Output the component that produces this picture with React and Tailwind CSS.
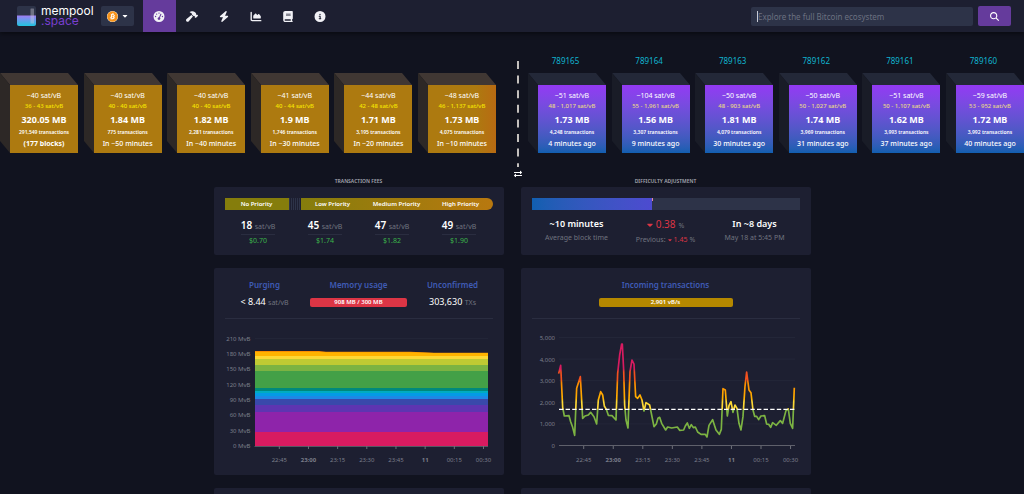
import { FaBitcoin, FaCaretDown, FaExchangeAlt } from "react-icons/fa";
import {
  FaBolt,
  FaBook,
  FaChartArea,
  FaCircleInfo,
  FaGaugeHigh,
  FaHammer,
  FaMagnifyingGlass,
} from "react-icons/fa6";

const navLinks = [
  { label: "Dashboard", Icon: FaGaugeHigh, active: true },
  { label: "Mining", Icon: FaHammer },
  { label: "Lightning", Icon: FaBolt },
  { label: "Graphs", Icon: FaChartArea },
  { label: "Docs", Icon: FaBook },
  { label: "About", Icon: FaCircleInfo },
];

const pendingBlocks = [
  { median: "~40", range: "36 - 43", size: "320.05 MB", txs: "291,549", time: "(177 blocks)", stack: true },
  { median: "~40", range: "40 - 40", size: "1.84 MB", txs: "775", time: "In ~50 minutes" },
  { median: "~40", range: "40 - 40", size: "1.82 MB", txs: "2,281", time: "In ~40 minutes" },
  { median: "~41", range: "40 - 44", size: "1.9 MB", txs: "1,746", time: "In ~30 minutes" },
  { median: "~44", range: "42 - 48", size: "1.71 MB", txs: "3,195", time: "In ~20 minutes" },
  { median: "~48", range: "46 - 1,137", size: "1.73 MB", txs: "4,075", time: "In ~10 minutes", next: true },
];

const minedBlocks = [
  { height: 789165, median: "~51", range: "48 - 1,017", size: "1.73 MB", txs: "4,248", time: "4 minutes ago" },
  { height: 789164, median: "~104", range: "55 - 1,961", size: "1.56 MB", txs: "3,307", time: "9 minutes ago" },
  { height: 789163, median: "~50", range: "48 - 903", size: "1.81 MB", txs: "4,079", time: "30 minutes ago" },
  { height: 789162, median: "~50", range: "50 - 1,027", size: "1.74 MB", txs: "3,969", time: "31 minutes ago" },
  { height: 789161, median: "~51", range: "50 - 1,107", size: "1.62 MB", txs: "3,993", time: "37 minutes ago" },
  { height: 789160, median: "~59", range: "53 - 952", size: "1.72 MB", txs: "3,992", time: "40 minutes ago" },
];

const fees = [
  { rate: 18, usd: "$0.70" },
  { rate: 45, usd: "$1.74" },
  { rate: 47, usd: "$1.82" },
  { rate: 49, usd: "$1.90" },
];

const timeLabels = ["22:45", "23:00", "23:15", "23:30", "23:45", "11", "00:15", "00:30"];
const boldLabels = ["23:00", "11"];

// [top edge, colour], each band is painted over the one before
const feeBands = [
  [26, "#fb8c00"],
  [27, "#ffb300"],
  [31, "#fdd835"],
  [34, "#c0ca33"],
  [40, "#7cb342"],
  [46, "#43a047"],
  [63, "#00897b"],
  [66, "#00acc1"],
  [68, "#039be5"],
  [71, "#1e88e5"],
  [74, "#3949ab"],
  [80, "#5e35b1"],
  [87, "#8e24aa"],
  [107, "#d81b60"],
];

const incomingPoints =
  "131,11 137,-14 143,112 148,138 162,137 167,155 173,172 179,196 185,55 196,20 203,145 210,138 220,135 227,127 237,140 245,162 250,90 257,65 263,75 268,108 274,118 280,136 291,137 303,150 308,10 314,-45 320,-78 322,-78 326,0 329,105 333,150 339,174 345,5 351,-30 357,-18 362,80 368,85 375,75 381,90 387,123 393,98 404,105 410,135 417,170 424,162 429,145 434,142 440,160 452,180 458,171 470,174 487,171 494,181 506,180 511,168 517,159 523,175 529,164 535,173 541,171 548,186 558,193 571,193 576,201 582,166 593,149 603,180 613,193 619,178 624,56 631,60 637,138 642,107 648,95 654,127 660,105 666,115 672,160 678,180 684,140 690,50 695,6 702,60 708,68 714,120 719,139 725,139 731,149 738,138 749,137 755,162 761,163 767,172 773,158 784,166 796,152 803,160 813,122 820,117 826,160 833,175 838,53";

function Logo() {
  return (
    <a href="#home" className="flex items-center gap-[5px]">
      <svg viewBox="0 0 19 20" className="h-5 w-[19px]" aria-hidden="true">
        <defs>
          <linearGradient id="logoFill" x1="0" y1="0" x2="0" y2="1">
            <stop offset="0" stopColor="#a07cf4" />
            <stop offset="1" stopColor="#1fc4de" />
          </linearGradient>
        </defs>
        <rect width="19" height="20" rx="2" fill="#2d3348" />
        <path d="M0 9.5h19V18a2 2 0 0 1-2 2H2a2 2 0 0 1-2-2z" fill="url(#logoFill)" />
        <rect x="13.5" y="2.5" width="3.5" height="15" rx="0.5" fill="#d0d0dc" opacity="0.4" />
      </svg>
      <span className="flex flex-col font-[Inter,sans-serif] text-[12px] leading-[10px] text-white">
        <span>mempool</span>
        <span className="text-[#7a3fd0]">.space</span>
      </span>
    </a>
  );
}

function NavBar() {
  return (
    <header className="flex h-8 items-center justify-between bg-[#1d1f31] pl-[17px] pr-[13px] shadow-[0_2px_4px_#0a0b12]">
      <div className="flex h-full items-center">
        <Logo />
        <button
          type="button"
          aria-label="Network"
          className="ml-[7px] flex h-5 w-[33px] items-center justify-center gap-1 rounded-xs bg-[#2d3348] text-white"
        >
          <FaBitcoin className="h-[11px] w-[11px] rounded-full bg-white text-[#f7931a]" />
          <FaCaretDown className="h-2 w-[6px]" />
        </button>
        <nav className="ml-[9px] flex h-full">
          {navLinks.map(({ label, Icon, active }) => (
            <a
              key={label}
              href={`#${label.toLowerCase()}`}
              aria-label={label}
              className={`flex h-full items-center justify-center text-[#f1f1f6] ${active ? "w-[33px] bg-[#653b9c]" : "w-8"}`}
            >
              <Icon className="h-[11px] w-3" />
            </a>
          ))}
        </nav>
      </div>
      <form className="flex items-center gap-[5px]" onSubmit={(e) => e.preventDefault()}>
        <div className="relative">
          <input
            type="text"
            aria-label="Search"
            placeholder="Explore the full Bitcoin ecosystem"
            className="block h-[19px] w-[222px] rounded-xs bg-[#2d3348] px-[7px] text-[8px] text-white outline-none placeholder:text-[#6b7080]"
          />
          <span className="absolute left-[6px] top-1 h-[11px] w-px bg-[#c8cad4]" />
        </div>
        <button
          type="submit"
          aria-label="Search"
          className="flex h-5 w-[33px] items-center justify-center rounded-xs bg-[#653b9c] text-white"
        >
          <FaMagnifyingGlass className="h-[9px] w-[9px]" />
        </button>
      </form>
    </header>
  );
}

function Cube({ block, mined }) {
  let face = "bg-[#ad7a10]";
  if (mined) face = "bg-linear-to-b from-[#9339f4] to-[#105fb0]";
  else if (block.next) face = "bg-linear-to-r from-[#ad7a10] from-70% to-[#b86a12]";

  return (
    <div className="flex shrink-0 flex-col">
      <a href={`#${block.height ?? "mempool"}`} className="h-[15px] pr-[3px] text-center text-[8px] leading-[15px] text-[#10b3cf]">
        {block.height}
      </a>
      <div className="relative mt-[5px] pl-[10px] pt-3">
        <svg viewBox="0 0 78 80" className="absolute inset-0 h-20 w-[78px]" aria-hidden="true">
          <path d="M0 0H68L78 12H10z" fill={mined ? "#232838" : "#403733"} />
          <path d="M0 0L10 12V80L0 68z" fill={mined ? "#191c27" : "#2d2826"} />
        </svg>
        <div className={`relative flex h-17 w-17 flex-col items-center whitespace-nowrap pt-[6px] text-white ${face}`}>
          <span className="text-[7px] leading-[10px]">{block.median} sat/vB</span>
          <span className={`text-[6px] font-medium leading-[10px] ${mined ? "text-[#e8d78a]" : "text-[#f5e400]"}`}>
            {block.range} sat/vB
          </span>
          <span className="mt-[2px] text-[9px] font-bold leading-[14px]">{block.size}</span>
          <span className="text-[5px] font-semibold leading-[10px]">{block.txs} transactions</span>
          <span className={`mt-px text-[7px] leading-[12px] ${block.stack ? "font-bold" : "font-medium"}`}>
            {block.time}
          </span>
        </div>
      </div>
    </div>
  );
}

function Blockchain() {
  return (
    <section className="grid grid-cols-[1fr_32px_1fr] pt-[21px]">
      <div className="flex justify-between">
        {pendingBlocks.map((block) => (
          <Cube key={block.time} block={block} />
        ))}
      </div>
      <div className="-mb-6 flex flex-col items-center pl-[11px] pt-2 text-white">
        <svg viewBox="0 0 2 108" className="h-[108px] w-[2px]" aria-hidden="true">
          <line x1="1" x2="1" y1="0" y2="106" stroke="#f0ece4" strokeWidth="1.6" strokeDasharray="8 6.6" />
        </svg>
        <FaExchangeAlt className="mt-px h-2 w-2" />
      </div>
      <div className="flex justify-between">
        {minedBlocks.map((block) => (
          <Cube key={block.height} block={block} mined />
        ))}
      </div>
    </section>
  );
}

function TransactionFees() {
  return (
    <section>
      <h2 className="text-center text-[5px] font-semibold uppercase leading-3 text-[#a5a7b1]">Transaction Fees</h2>
      <div className="h-17 rounded-xs bg-[#1d1f31] px-[11px] pt-[11px]">
        <div className="flex h-3 text-[6px] font-semibold leading-3 text-white">
          <div className="w-16 bg-[#857d0c] text-center">No Priority</div>
          <div className="w-3 bg-[repeating-linear-gradient(90deg,#2d3348_0_1px,#1d1f31_1px_2px)]" />
          <div className="grid flex-1 grid-cols-3 rounded-r-full bg-linear-to-r from-[#857d0c] to-[#b8780f] text-center">
            <span>Low Priority</span>
            <span>Medium Priority</span>
            <span>High Priority</span>
          </div>
        </div>
        <div className="mt-2 grid grid-cols-4 text-center">
          {fees.map((fee) => (
            <div key={fee.rate} className="flex flex-col items-center">
              <div className="border-b border-[#2a2d40] text-[10px] font-semibold leading-[14px] text-white">
                {fee.rate} <span className="text-[7px] font-normal text-[#70737f]">sat/vB</span>
              </div>
              <div className="text-[7px] leading-3 text-[#3bb54a]">{fee.usd}</div>
            </div>
          ))}
        </div>
      </div>
    </section>
  );
}

function DifficultyAdjustment() {
  return (
    <section>
      <h2 className="text-center text-[5px] font-semibold uppercase leading-3 text-[#a5a7b1]">Difficulty Adjustment</h2>
      <div className="h-17 rounded-xs bg-[#1d1f31] px-[11px] pt-[11px]">
        <div className="flex h-3 bg-[#2d3348]">
          <div className="w-[45%] bg-linear-to-r from-[#105fb0] to-[#4d4bd0]" />
          <div className="h-[3px] w-px bg-[#e58aa0]" />
        </div>
        <div className="mt-[7px] grid grid-cols-[90px_1fr_90px] text-center text-[7px] text-[#70737f]">
          <div>
            <div className="text-[9px] font-semibold leading-[14px] text-white">~10 minutes</div>
            <div className="leading-[14px]">Average block time</div>
          </div>
          <div>
            <div className="flex items-baseline justify-center gap-[3px] text-[10px] leading-[14px] text-[#dc3545]">
              <FaCaretDown className="h-[10px] w-[6px] self-center" />
              0.38 <span className="text-[7px] text-[#70737f]">%</span>
            </div>
            <div className="flex items-center justify-center gap-[2px] leading-[14px]">
              Previous: <FaCaretDown className="h-[6px] w-1 text-[#dc3545]" />
              <span className="text-[#dc3545]">1.45</span> %
            </div>
          </div>
          <div>
            <div className="text-[9px] font-semibold leading-[14px] text-white">In ~8 days</div>
            <div className="leading-[14px]">May 18 at 5:45 PM</div>
          </div>
        </div>
      </div>
    </section>
  );
}

function TimeAxis({ start, step }) {
  return timeLabels.map((label, i) => (
    <g key={label}>
      <path d={`M${start + i * step} 121v3`} stroke="#6e7079" />
      <text
        x={start + i * step}
        y="137"
        fontSize="6"
        fill="#7b7e8a"
        textAnchor="middle"
        fontWeight={boldLabels.includes(label) ? 700 : 400}
      >
        {label}
      </text>
    </g>
  ));
}

function MempoolChart() {
  return (
    <svg viewBox="0 0 290 150" className="block h-auto w-full" role="img" aria-label="Mempool by vBytes">
      {[210, 180, 150, 120, 90, 60, 30, 0].map((value, i) => (
        <g key={value}>
          <path d={`M41 ${13.5 + i * 15.36}H274`} stroke="#292c3e" strokeWidth="0.5" />
          <text x="36.5" y={15.5 + i * 15.36} fontSize="6" fill="#7b7e8a" textAnchor="end">
            {value} MvB
          </text>
        </g>
      ))}
      {feeBands.map(([top, color], i) =>
        i < 2 ? (
          <path key={color} d={`M41 ${top}L105 ${top}L112 ${26.8 + i * 0.4}H196L220 ${27.8 + i * 0.2}H274V40H41z`} fill={color} />
        ) : (
          <rect key={color} x="41" y={top} width="233" height={121 - top} fill={color} />
        )
      )}
      <path d="M40.5 121.5H274" stroke="#6e7079" strokeWidth="0.7" />
      <TimeAxis start={65.3} step={29.17} />
    </svg>
  );
}

function IncomingChart() {
  return (
    <svg viewBox="0 0 290 150" className="block h-auto w-full" role="img" aria-label="Incoming transactions">
      <defs>
        <linearGradient id="rate" gradientUnits="userSpaceOnUse" x1="0" y1="226" x2="0" y2="-97">
          <stop offset="0.33" stopColor="#7cb342" />
          <stop offset="0.335" stopColor="#fdd835" />
          <stop offset="0.41" stopColor="#fdd835" />
          <stop offset="0.43" stopColor="#ffb300" />
          <stop offset="0.5" stopColor="#ffa000" />
          <stop offset="0.58" stopColor="#fb8c00" />
          <stop offset="0.61" stopColor="#f4511e" />
          <stop offset="0.68" stopColor="#f4511e" />
          <stop offset="0.71" stopColor="#d81b60" />
        </linearGradient>
      </defs>
      {["5,000", "4,000", "3,000", "2,000", "1,000", "0"].map((value, i) => (
        <g key={value}>
          <path d={`M38 ${12.5 + i * 21.6}H274`} stroke="#292c3e" strokeWidth="0.6" />
          <text x="34" y={15 + i * 21.6} fontSize="6" fill="#7b7e8a" textAnchor="end">
            {value}
          </text>
        </g>
      ))}
      <path d="M38 120.5H274" stroke="#6e7079" strokeWidth="0.8" />
      <g transform="translate(-6 45) scale(0.3333)">
        <polyline points={incomingPoints} fill="none" stroke="url(#rate)" strokeWidth="5" strokeLinejoin="round" />
      </g>
      <path d="M38 84.4H274" stroke="#fff" strokeWidth="1.1" strokeDasharray="4.4 2.2" />
      <TimeAxis start={62.7} step={29.55} />
    </svg>
  );
}

function MempoolCard() {
  return (
    <section className="rounded-xs bg-[#1d1f31] pt-[11px]">
      <div className="mx-[11px] grid h-10 grid-cols-[80px_1fr_80px] border-b border-[#2a2d40] text-center">
        <div>
          <h3 className="text-[8px] font-semibold leading-3 text-[#3f5bb5]">Purging</h3>
          <p className="mt-1 text-[9px] leading-[14px] text-white">
            &lt; 8.44 <span className="text-[7px] text-[#70737f]">sat/vB</span>
          </p>
        </div>
        <div>
          <h3 className="text-[8px] font-semibold leading-3 text-[#3f5bb5]">Memory usage</h3>
          <p className="mx-auto mt-[7px] w-[97px] rounded-xs bg-[#dc3545] text-[6px] font-semibold leading-[9px] text-white">
            908 MB / 300 MB
          </p>
        </div>
        <div>
          <h3 className="text-[8px] font-semibold leading-3 text-[#3f5bb5]">Unconfirmed</h3>
          <p className="mt-1 text-[9px] leading-[14px] text-white">
            303,630 <span className="text-[7px] text-[#70737f]">TXs</span>
          </p>
        </div>
      </div>
      <div className="mt-[6px]">
        <MempoolChart />
      </div>
    </section>
  );
}

function IncomingCard() {
  return (
    <section className="rounded-xs bg-[#1d1f31] pt-[11px]">
      <div className="mx-[11px] h-10 border-b border-[#2a2d40] text-center">
        <h3 className="text-[8px] font-semibold leading-3 text-[#3f5bb5]">Incoming transactions</h3>
        <p className="mx-auto mt-[7px] w-1/2 rounded-xs bg-[#b58800] text-[6px] font-semibold leading-[9px] text-white">
          2,901 vB/s
        </p>
      </div>
      <div className="mt-[6px]">
        <IncomingChart />
      </div>
    </section>
  );
}

function App() {
  return (
    <div className="h-screen overflow-hidden bg-[#11131f] font-['Noto_Sans',sans-serif]">
      <NavBar />
      <Blockchain />
      <main className="mx-auto mt-[21px] grid max-w-[597px] grid-cols-2 gap-x-[17px] gap-y-[13px]">
        <TransactionFees />
        <DifficultyAdjustment />
        <MempoolCard />
        <IncomingCard />
        <div className="h-12 rounded-xs bg-[#1d1f31]" />
        <div className="h-12 rounded-xs bg-[#1d1f31]" />
      </main>
    </div>
  );
}

export default App;
